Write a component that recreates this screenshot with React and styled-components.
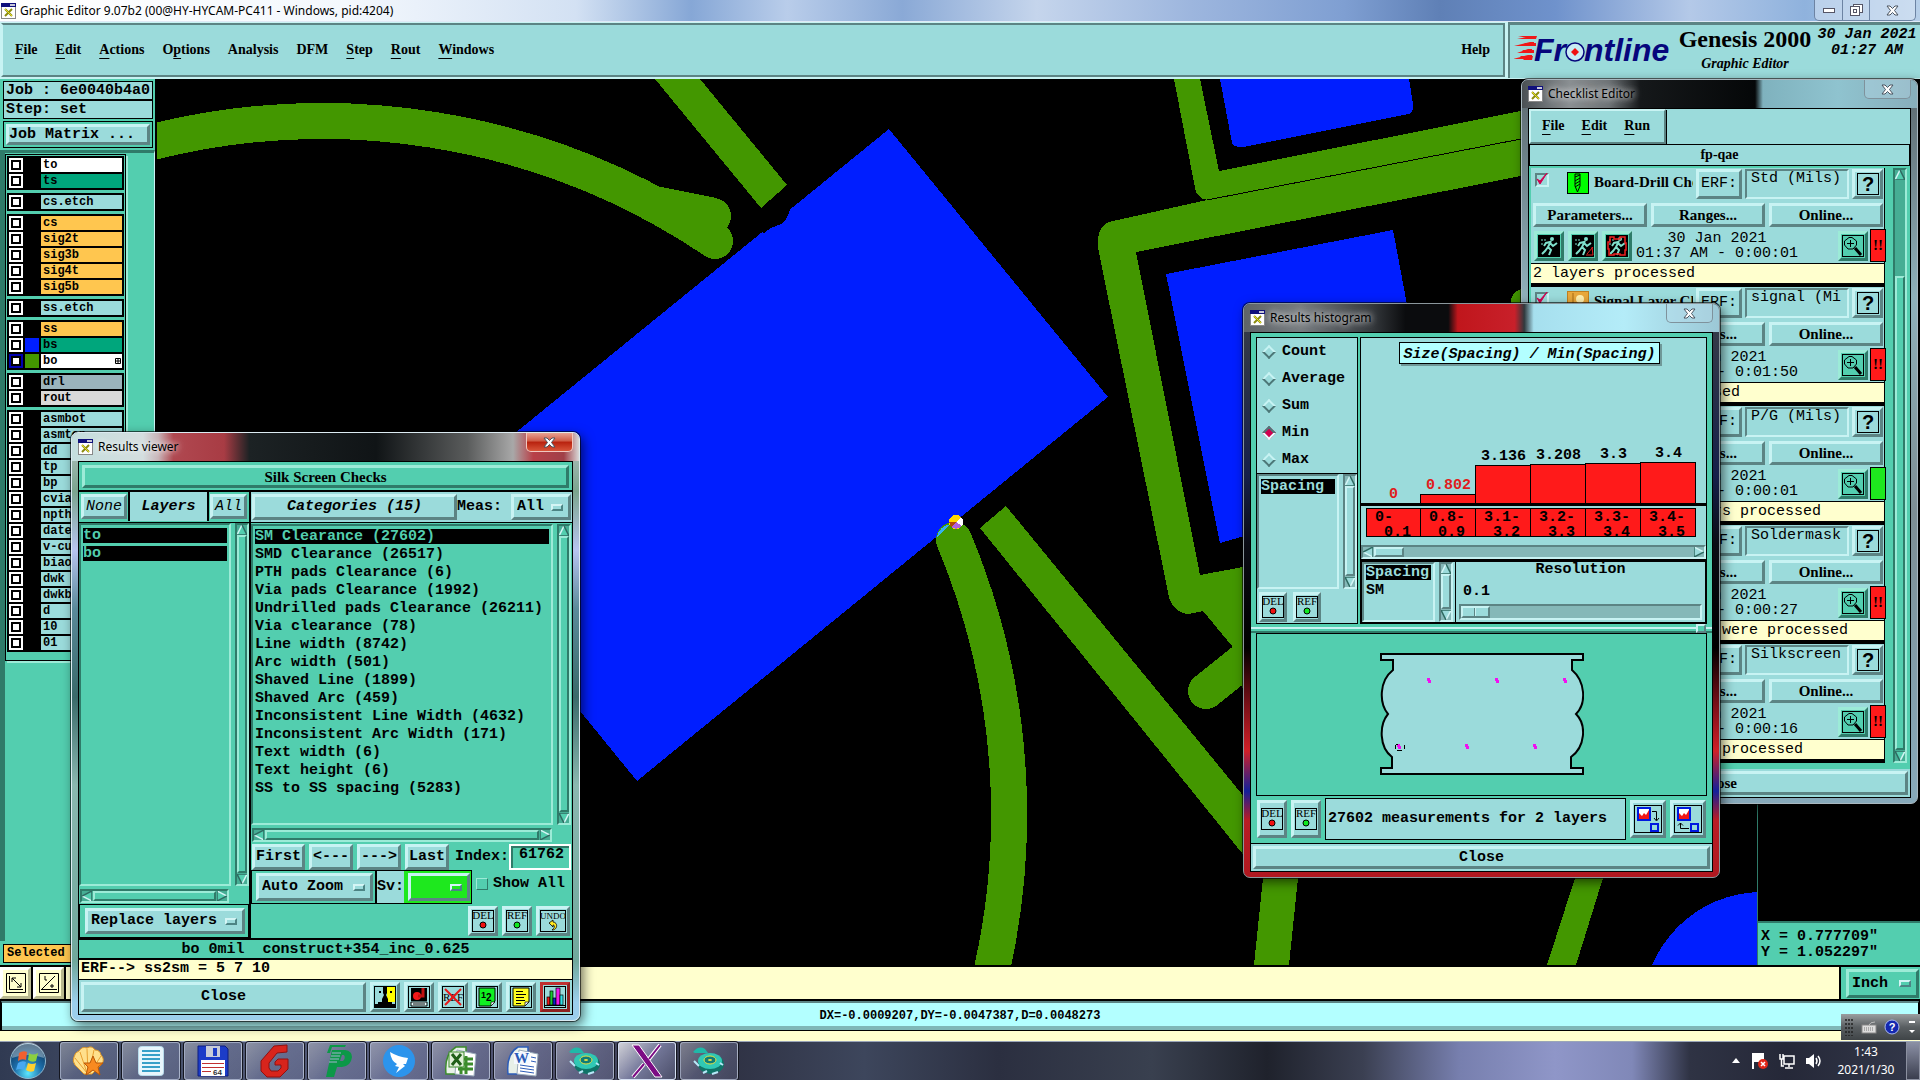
import { useState } from 'react';
import styled, { createGlobalStyle, css } from 'styled-components';

const MONO = '"Liberation Mono", "Courier New", monospace';
const SERIF = '"Liberation Serif", "Times New Roman", serif';
const UI = '"Noto Sans", "Open Sans", sans-serif';

const teal = '#53ceaf';
const cyan = '#9bdbdb';
const pale = '#b3ffff';
const cream = '#ffffce';
const copper = '#ffc64f';

const GlobalStyle = createGlobalStyle`
        * { box-sizing: border-box; }
        body {
            margin: 0;
            background: #000;
            font: 700 15px/16px ${MONO};
            color: #000;
        }
        button, input, select {
            font: inherit;
            color: inherit;
            margin: 0;
            padding: 0;
            border-radius: 0;
        }
        ul { margin: 0; padding: 0; list-style: none; }
        svg { display: block; }
`

const raised = css`
        border: 3px solid;
        border-color: ${p => p.$teal ? '#9cebd7 #2f7b69 #2f7b69 #9cebd7' : '#c8f3f3 #5c8484 #5c8484 #c8f3f3'};
        background: ${p => p.$teal ? teal : cyan};
`

const sunken = css`
        border: 2px solid;
        border-color: ${p => p.$teal ? '#2f7b69 #9cebd7 #9cebd7 #2f7b69' : '#5c8484 #c8f3f3 #c8f3f3 #5c8484'};
`

/* ---------- main window ---------- */

const Desktop = styled.div`
        position: relative;
        min-height: 100vh;
        display: flex;
        flex-direction: column;
        overflow: hidden;
`

const AppTitle = styled.header`
        height: 22px;
        flex: none;
        display: flex;
        align-items: center;
        gap: 4px;
        padding-left: 1px;
        font: 400 12px/18px ${UI};
        background: linear-gradient(90deg, #fff 0, #f4f8fd 18%, #d3e1f3 30%, #86a7d6 36%, #b9cdea 41%, #8aa9d6 47%, #c5d5ec 54%, #9db6de 62%, #7f9fd2 70%, #5f80b6 75%, #6f92cc 81%, #b4c9e8 88%, #8fb2dd 94%, #b7cfe9 100%);
        border-bottom: 1px solid #dfe9f5;
`

const AppButtons = styled.div`
        margin-left: auto;
        margin-right: 4px;
        align-self: stretch;
        display: flex;
        border: 1px solid #6d83a3;
        border-top: 0;
        border-radius: 0 0 5px 5px;
        background: rgba(225, 235, 248, .5);
`

const AppButton = styled.button`
        width: ${p => p.$wide ? 46 : 27}px;
        display: grid;
        place-items: center;
        border: 0;
        border-left: 1px solid #6d83a3;
        background: none;
        &:first-child { border-left: 0; }
`

const Header = styled.div`
        height: 57px;
        flex: none;
        display: flex;
        gap: 3px;
        background: #c8f3f3;
`

const MenuPanel = styled.nav`
        flex: 1;
        display: flex;
        align-items: center;
        gap: 18px;
        padding: 0 13px 0 12px;
        margin: 1px 0 2px 1px;
        background: ${cyan};
        border: 2px solid;
        border-color: #5c8484 #5c8484 #5c8484 #c8f3f3;
`

const MenuButton = styled.button`
        border: 0;
        background: none;
        font: 700 14px/20px ${SERIF};
        margin-left: ${p => p.$push ? 'auto' : 0};
        u { text-underline-offset: 4px; text-decoration-thickness: 1px; }
`

const Brand = styled.div`
        width: 412px;
        display: flex;
        padding-left: 4px;
        background: ${cyan};
        border-top: 3px solid #5c8484;
        border-left: 2px solid #5c8484;
        margin-bottom: 1px;
`

const BrandTitle = styled.div`
        width: 138px;
        text-align: center;
        white-space: nowrap;
        font: 700 24px/28px ${SERIF};
        em { display: block; font-size: 14px; line-height: 22px; }
`

const BrandClock = styled.div`
        flex: 1;
        text-align: center;
        font-style: italic;
        padding-top: 2px;
        white-space: pre-line;
`

const Workspace = styled.div`
        flex: 1;
        min-height: 0;
        display: flex;
        background: #000;
        border-bottom: 2px solid #000;
`

const Sidebar = styled.aside`
        width: 157px;
        flex: none;
        display: flex;
        flex-direction: column;
        background: ${teal};
        border-right: 2px solid #000;
`

const JobInfo = styled.div`
        height: 19px;
        margin: 0 2px 0 3px;
        padding-left: 2px;
        border: 1px solid #000;
        background: ${cyan};
        line-height: 18px;
        white-space: pre;
        &:first-child { margin-top: 2px; }
`

const MatrixBox = styled.div`
        margin: 2px 2px 2px 3px;
        padding: 2px;
        border: 1px solid #000;
        height: 27px;
`

const FlatButton = styled.button`
        ${raised}
        width: ${p => p.$fill ? '100%' : 'auto'};
        height: 100%;
        flex: ${p => p.$grow ? 1 : 'none'};
        min-width: 0;
        padding: 0 ${p => p.$pad || 0}px;
        text-align: ${p => p.$left ? 'left' : 'center'};
        font-style: ${p => p.$italic ? 'italic' : 'normal'};
        font-weight: ${p => p.$thin ? 400 : 700};
        font-family: ${p => p.$serif ? SERIF : MONO};
        white-space: nowrap;
        overflow: hidden;
        line-height: 16px;
`

const LayerArea = styled.div`
        flex: 1;
        min-height: 0;
        border-top: 3px solid #2f7b69;
        border-left: 5px solid #2f7b69;
        border-right: 1px solid #c8f3f3;
`

const LayerFrame = styled.div`
        width: 121px;
        border: 1px solid #000;
        padding: 1px 1px 8px;
        display: flex;
        flex-direction: column;
        gap: 3px;
        margin-top: 1px;
        box-shadow: 2px 2px 0 #9cebd7;
`

const LayerGroup = styled.ul`
        background: #000;
        padding: 1px 2px;
`

const LayerRow = styled.li`
        height: 16px;
        display: flex;
        align-items: center;
        gap: 2px;
`

const LayerCheck = styled.input`
        appearance: none;
        flex: none;
        width: 14px;
        height: 14px;
        border: 2px solid ${p => p.$active ? '#0000b0' : '#fff'};
        background: #fff;
        box-shadow: inset 0 0 0 2px #000;
`

const Swatch = styled.span`
        width: 14px;
        height: 14px;
        background: ${p => p.$color};
`

const LayerName = styled.button`
        flex: 1;
        display: flex;
        align-items: center;
        justify-content: space-between;
        height: 14px;
        border: 0;
        padding: 0 1px 0 2px;
        background: ${p => p.$color};
        font: 700 12px/14px ${MONO};
        text-align: left;
`

const SelectedTag = styled.div`
        margin: 3px 0 2px 3px;
        border: 1px solid #000;
        background: ${copper};
        height: 19px;
        padding-left: 3px;
        font-size: 12px;
        line-height: 17px;
`

const Canvas = styled.svg`
        flex: 1;
        min-width: 0;
        height: auto;
        align-self: stretch;
`

const RightColumn = styled.div`
        width: 163px;
        flex: none;
        display: flex;
        flex-direction: column;
        justify-content: flex-end;
        border-left: 1px solid #2f7b69;
`

const Coordinates = styled.div`
        height: 44px;
        padding: 6px 3px;
        background: ${teal};
        border-top: 2px solid #2f7b69;
        white-space: pre;
`

const CommandRow = styled.div`
        height: 34px;
        flex: none;
        display: flex;
        gap: 2px;
        background: #000;
        border-bottom: 2px solid #000;
`

const ViewButton = styled.button`
        width: 31px;
        display: grid;
        place-items: center;
        background: ${cream};
        border: 3px solid;
        border-color: #fff #b9b98f #b9b98f #fff;
`

const CommandLine = styled.input`
        flex: 1;
        border: 0;
        padding: 0 120px;
        background: ${cream};
`

const UnitBox = styled.div`
        width: 79px;
        padding: 2px 1px 1px 5px;
        background: ${teal};
`

const StatusRow = styled.output`
        height: 30px;
        flex: none;
        display: block;
        margin: 0 1px;
        padding: 2px 2px;
        border: 1px solid #000;
        border-top: 2px solid #5c8484;
        background: ${pale};
        font-size: 12px;
        line-height: 22px;
        text-align: center;
        box-shadow: inset 0 -4px 0 #7fb7b7;
`

const CreamStrip = styled.div`
        height: 10px;
        flex: none;
        background: ${cream};
`

/* ---------- floating windows ---------- */

const FloatWindow = styled.section`
        position: absolute;
        left: ${p => p.$x}px;
        top: ${p => p.$y}px;
        width: ${p => p.$w}px;
        padding: 0 6px 5px;
        border: 1px solid;
        border-color: ${p => p.$edge || '#a9b8c0'};
        border-radius: 7px;
        background: ${p => p.$glass};
        box-shadow: 0 0 0 1px rgba(0, 0, 0, .6), 3px 4px 12px rgba(0, 0, 0, .6);
        overflow: hidden;
`

const FloatTitle = styled.div`
        display: flex;
        gap: 5px;
        align-items: center;
        height: 28px;
        margin: 0 -6px;
        padding: 0 6px;
        background: ${p => p.$glass};
        font: 400 12px/18px ${UI};
        h2 { margin: 0; font: inherit; text-shadow: 0 0 6px rgba(255, 255, 255, .9), 0 0 10px rgba(255, 255, 255, .7); }
`

const CloseX = styled.button`
        margin-left: auto;
        align-self: flex-start;
        width: 47px;
        height: 19px;
        display: grid;
        place-items: center;
        border: 1px solid ${p => p.$red ? '#f0c8c0' : '#7f929c'};
        border-top: 0;
        border-radius: 0 0 5px 5px;
        background: ${p => p.$red ? 'linear-gradient(#e8a293, #cf5a45 45%, #b8210e 50%, #d8553a)' : 'rgba(190, 220, 235, .35)'};
`

const Client = styled.div`
        border: 1px solid #000;
        background: ${p => p.$color || teal};
`

const Strip = styled.div`
        height: ${p => p.$h}px;
        padding: 0 2px;
        line-height: ${p => p.$h - 2}px;
        text-align: ${p => p.$center ? 'center' : 'left'};
        white-space: pre;
        overflow: hidden;
        background: ${p => p.$color || teal};
        border-top: ${p => p.$top || 0}px solid #000;
        border-bottom: ${p => p.$line || 1}px solid #000;
        font-weight: ${p => p.$thin ? 400 : 700};
`

const Row = styled.div`
        display: flex;
        align-items: ${p => p.$align || 'stretch'};
        gap: ${p => p.$gap || 0}px;
        height: ${p => p.$h ? p.$h + 'px' : 'auto'};
        width: ${p => p.$w ? p.$w + 'px' : 'auto'};
        padding: ${p => p.$pad || 0};
        justify-content: ${p => p.$justify || 'flex-start'};
        background: ${p => p.$color || 'none'};
        border-top: ${p => p.$top || 0}px solid #000;
        border-bottom: ${p => p.$line || 0}px solid #000;
`

const Column = styled.div`
        display: flex;
        flex-direction: column;
        flex: ${p => p.$w ? 'none' : 1};
        width: ${p => p.$w ? p.$w + 'px' : 'auto'};
        min-width: 0;
`

const LeftColumn = styled(Column)`
        border-right: 2px solid #000;
`

const HeadLabel = styled.div`
        flex: 1;
        background: ${cyan};
        border: solid #000;
        border-width: 0 2px;
        margin: -2px 1px;
        text-align: center;
        font-style: italic;
        line-height: 29px;
`

const ListBox = styled.ul`
        ${sunken}
        flex: 1;
        min-width: 0;
        padding: ${p => p.$tight ? '0 2px' : '2px'};
        background: ${p => p.$teal ? teal : cyan};
`

const ListItem = styled.li`
        height: 18px;
        border: solid ${p => p.$teal ? teal : cyan};
        border-width: 1px 0 2px;
        line-height: 15px;
        white-space: nowrap;
        overflow: hidden;
        background: ${p => p.$on ? '#000' : 'none'};
        color: ${p => p.$on ? (p.$teal ? teal : cyan) : '#000'};
`

const BarTrack = styled.div`
        ${sunken}
        flex: none;
        display: flex;
        flex-direction: ${p => p.$across ? 'row' : 'column'};
        width: ${p => p.$across ? 'auto' : '14px'};
        height: ${p => p.$across ? '14px' : 'auto'};
        background: ${p => p.$teal ? '#46ad94' : '#85b8b8'};
        svg { flex: none; }
`

const Thumb = styled.span`
        ${raised}
        border-width: 2px;
        flex: ${p => p.$size ? 'none' : 1};
        width: ${p => p.$across && p.$size ? p.$size + 'px' : 'auto'};
        margin: ${p => p.$across ? '0 1px' : '1px 0'};
        margin-top: ${p => p.$start || 0}px;
`

const TrackRest = styled.span`
        flex: 1;
`

const HScrollSlot = styled.div`
        height: 18px;
        padding: 3px 20px 1px 1px;
`

const OptionLabel = styled.label`
        ${raised}
        position: relative;
        display: flex;
        align-items: center;
        height: 100%;
        flex: ${p => p.$w ? 'none' : 1};
        width: ${p => p.$w ? p.$w + 'px' : 'auto'};
        background: ${p => p.$fill || (p.$teal ? teal : cyan)};
        &::after {
            content: '';
            box-sizing: border-box;
            position: absolute;
            right: 5px;
            width: 12px;
            height: 7px;
            border: 2px solid;
            border-color: #d4f5f5 #4c8484 #4c8484 #d4f5f5;
            pointer-events: none;
        }
        select {
            appearance: none;
            width: 100%;
            border: 0;
            padding: 0 0 0 3px;
            background: none;
            line-height: 16px;
        }
`

const FieldText = styled.span`
        background: ${p => p.$color || 'none'};
        line-height: ${p => p.$lh || 26}px;
        border-left: ${p => p.$bar || 0}px solid #000;
        white-space: nowrap;
`

const IndexLabel = styled.label`
        display: flex;
        margin-left: auto;
`

const IndexInput = styled.input`
        width: 62px;
        border: 2px solid #fff;
        box-shadow: inset 2px 2px 0 #2f7b69;
        background: ${teal};
        padding: 0 0 4px 8px;
`

const Framed = styled.div`
        display: flex;
        border: 1px solid #000;
        height: ${p => p.$h}px;
        padding: ${p => p.$pad || 0};
`

const CheckLabel = styled.label`
        display: flex;
        gap: 5px;
        align-items: center;
        padding: 6px 0 0 4px;
        height: 22px;
        white-space: nowrap;
        input {
            ${sunken}
            appearance: none;
            width: 12px;
            height: 12px;
            border-width: 1px;
            border-color: #9cebd7 #2f7b69 #2f7b69 #9cebd7;
        }
`

const IconButton = styled.button`
        ${raised}
        flex: none;
        width: ${p => p.$w || 30}px;
        height: ${p => p.$h || 30}px;
        display: grid;
        place-items: center;
        ${p => p.$red && css`border-color: #c03030 #902020 #902020 #c03030;`}
`

/* ---------- histogram ---------- */

const Panel = styled.div`
        border: ${p => p.$edge || 1}px solid #000;
        background: ${p => p.$color || cyan};
        flex: ${p => p.$grow ? 1 : 'none'};
        height: ${p => p.$h ? p.$h + 'px' : 'auto'};
        width: ${p => p.$w ? p.$w + 'px' : 'auto'};
        display: flex;
        flex-direction: ${p => p.$row ? 'row' : 'column'};
        min-width: 0;
`

const MapPanel = styled(Panel)`
        align-items: center;
        justify-content: center;
        padding-bottom: 2px;
`

const MessagePanel = styled(Panel)`
        padding: 0 2px;
        line-height: 40px;
`

const RadioLabel = styled.label`
        display: flex;
        align-items: center;
        gap: 8px;
        height: 27px;
        padding-left: 6px;
        input {
            appearance: none;
            width: 10px;
            height: 10px;
            margin-left: 1px;
            transform: rotate(45deg);
            border: 2px solid;
            border-color: #c8f3f3 #4c7777 #4c7777 #c8f3f3;
        }
        input:checked {
            border-color: #4c7777 #e8ffff #e8ffff #4c7777;
            background: #d00050;
        }
`

const ChartTitle = styled.div`
        align-self: center;
        margin: 4px 8px 0 0;
        height: 22px;
        padding: 0 3px;
        border: 1px solid #000;
        background: ${pale};
        box-shadow: 2px 2px 0 #6f9898;
        font-style: italic;
        line-height: 24px;
`

const Bars = styled.div`
        flex: 1;
        display: flex;
        align-items: flex-end;
        padding-left: 5px;
        border-bottom: 3px solid #000;
`

const BarColumn = styled.div`
        width: 55px;
        text-align: center;
        color: ${p => p.$low ? '#e01c1c' : '#000'};
        div {
            background: #ff1a1a;
            border: solid #000;
            border-width: ${p => p.$empty ? 0 : '1px 1px 0 0'};
            box-shadow: ${p => p.$empty ? 'none' : '-1px 0 0 #000'};
        }
`

const Ranges = styled.div`
        display: flex;
        margin: 2px 0 8px 5px;
        height: 29px;
`

const Range = styled.div`
        width: 55px;
        background: #ff1a1a;
        border: 1px solid #000;
        border-left-width: ${p => p.$first ? 1 : 0}px;
        padding-left: 8px;
        line-height: 15px;
        padding-top: 1px;
        white-space: pre;
`

const Slider = styled.input`
        appearance: none;
        ${sunken}
        height: 16px;
        width: 100%;
        background: #85b8b8;
        &::-webkit-slider-thumb {
            appearance: none;
            width: 29px;
            height: 12px;
            border: 2px solid;
            border-color: #c8f3f3 #5c8484 #5c8484 #c8f3f3;
            background: linear-gradient(90deg, ${cyan} 11px, #5c8484 11px, #5c8484 12px, #c8f3f3 12px, #c8f3f3 13px, ${cyan} 13px);
        }
`

const ResolutionField = styled.label`
        flex: 1;
        display: flex;
        flex-direction: column;
        justify-content: space-between;
        min-width: 0;
        padding: 0 3px 2px;
        border-left: 1px solid #000;
        span { text-align: center; }
        output { padding-left: 4px; margin-bottom: -2px; }
`

const Sash = styled.div`
        height: 9px;
        display: flex;
        align-items: center;
        justify-content: flex-end;
        padding-right: 6px;
        background: linear-gradient(transparent 3px, #c8f3f3 3px, #c8f3f3 5px, transparent 5px, transparent 7px, #2f7b69 7px);
        i { ${raised} border-width: 2px; background: ${teal}; width: 10px; height: 9px; }
`

/* ---------- checklist ---------- */

const CheckMenu = styled.nav`
        width: 137px;
        height: 35px;
        display: flex;
        align-items: center;
        gap: 17px;
        padding: 0 0 2px 11px;
        ${raised}
        border-width: 2px;
        box-shadow: 1px 1px 0 #000;
`

const CheckTitle = styled.div`
        height: 22px;
        border: 1px solid #000;
        text-align: center;
        font: 700 14px/19px ${SERIF};
`

const CheckItem = styled.article`
        height: 119px;
        background: ${cyan};
        border-right: 1px solid #000;
        border-bottom: 3px solid #000;
        font-weight: 400;
`

const ItemName = styled.label`
        flex: 1;
        display: flex;
        align-items: flex-start;
        min-width: 0;
        overflow: hidden;
        font: 700 15px/26px ${SERIF};
        white-space: nowrap;
        input {
            ${sunken}
            appearance: none;
            flex: none;
            width: 14px;
            height: 14px;
            margin: 4px 18px 0 1px;
        }
        svg { flex: none; margin: 3px 5px 0 0; }
`

const Tick = styled.span`
        width: 0;
        svg { margin: 4px 0 0 5px; pointer-events: none; position: relative; }
`

const ErfInput = styled.input`
        ${sunken}
        width: 104px;
        height: 30px;
        background: ${cyan};
        padding: 0 0 12px 4px;
`

const ItemTime = styled.time`
        flex: 1;
        text-align: center;
        white-space: pre;
        line-height: 15px;
`

const Severity = styled.span`
        width: 16px;
        height: 33px;
        border: 1px solid #000;
        background: ${p => p.$color};
        font: 700 15px/30px ${SERIF};
        text-align: center;
`

/* ---------- taskbar ---------- */

const Taskbar = styled.footer`
        height: 39px;
        flex: none;
        display: flex;
        align-items: center;
        gap: 4px;
        border-top: 1px solid #9aa5b8;
        background: linear-gradient(90deg, #303a52 0, #48526c 8%, #555c7c 20%, #4a4c68 30%, #2f3244 38%, #3d465c 45%, #2b2f40 52%, #39404f 60%, #1f222c 66%, #3b4052 71%, #777fae 76%, #8f96c8 81%, #8088b8 85%, #2f3344 88%, #252838 93%, #33384a 100%);
`

const StartButton = styled.button`
        width: 56px;
        border: 0;
        background: none;
        display: grid;
        place-items: center;
`

const TaskButton = styled.button`
        width: 58px;
        height: 38px;
        display: grid;
        place-items: center;
        border: 1px solid rgba(215, 225, 245, ${p => p.$on ? .95 : .55});
        border-radius: 3px;
        background: linear-gradient(135deg, rgba(255, 255, 255, ${p => p.$on ? .75 : .35}), rgba(170, 175, 220, ${p => p.$on ? .5 : .25}) 50%, rgba(150, 155, 200, .2));
        box-shadow: 0 0 0 1px #14161f;
`

const Tray = styled.div`
        margin-left: auto;
        height: 100%;
        display: flex;
        align-items: center;
        gap: 10px;
        color: #fff;
        font: 400 12px/18px ${UI};
        text-align: center;
        time { width: 60px; white-space: pre-line; margin-left: 3px; }
        > button {
            width: 14px;
            height: 100%;
            border: 1px solid #8b90a0;
            background: linear-gradient(#8a8fa4, #3a3e4e);
        }
`

const LanguageBar = styled.div`
        position: absolute;
        right: 0;
        bottom: 40px;
        width: 79px;
        height: 26px;
        background: linear-gradient(#9a9ea0, #5a5f62 50%, #3f4447);
        display: flex;
        align-items: center;
        justify-content: space-around;
`

/* ---------- data ---------- */

const layerGroups = [
    [['to', '#fff'], ['ts', '#00a67c']],
    [['cs.etch', cyan]],
    [['cs', copper], ['sig2t', copper], ['sig3b', copper], ['sig4t', copper], ['sig5b', copper]],
    [['ss.etch', cyan]],
    [['ss', copper], ['bs', '#00a67c', '#001eff'], ['bo', '#fff', '#439700']],
    [['drl', '#9ab4bc'], ['rout', '#d9d9d9']],
    ['asmbot', 'asmtop', 'dd', 'tp', 'bp', 'cvia', 'npth', 'date', 'v-cut', 'biao', 'dwk', 'dwkb', 'd', '10', '01'].map(n => [n, cyan]),
]

const categories = [
    'SM Clearance (27602)', 'SMD Clearance (26517)', 'PTH pads Clearance (6)', 'Via pads Clearance (1992)',
    'Undrilled pads Clearance (26211)', 'Via clearance (78)', 'Line width (8742)', 'Arc width (501)',
    'Shaved Line (1899)', 'Shaved Arc (459)', 'Inconsistent Line Width (4632)', 'Inconsistent Arc Width (171)',
    'Text width (6)', 'Text height (6)', 'SS to SS spacing (5283)',
]

const bars = [
    { label: '0', height: 0, from: '0-', to: '0.1', low: true },
    { label: '0.802', height: 9, from: '0.8-', to: '0.9', low: true },
    { label: '3.136', height: 38, from: '3.1-', to: '3.2' },
    { label: '3.208', height: 39, from: '3.2-', to: '3.3' },
    { label: '3.3', height: 40, from: '3.3-', to: '3.4' },
    { label: '3.4', height: 41, from: '3.4-', to: '3.5' },
]

const checks = [
    { name: 'Board-Drill Checks', erf: 'Std (Mils)', time: '01:37 AM - 0:00:01', note: '2 layers processed', color: '#00ff00', flag: '#ff1a1a' },
    { name: 'Signal Layer Checks', erf: 'signal (Mi', time: '01:39 AM - 0:01:50', note: '6 layers were processed', color: '#e8a83c', flag: '#ff1a1a' },
    { name: 'Power/Ground Checks', erf: 'P/G (Mils)', time: '01:39 AM - 0:00:01', note: 'No power/ground layers processed', color: '#e8a83c', flag: '#1ee81e' },
    { name: 'Solder Mask Checks', erf: 'Soldermask', time: '01:40 AM - 0:00:27', note: '2 solder mask layers were processed', color: '#00a67c', flag: '#ff1a1a' },
    { name: 'Silk Screen Checks', erf: 'Silkscreen', time: '01:41 AM - 0:00:16', note: '2 silk screen layers processed', color: '#fff', flag: '#ff1a1a' },
]

/* ---------- icons ---------- */

const XIcon = () => (
    <svg width="15" height="16" viewBox="0 0 15 16">
        <rect x=".5" y=".5" width="14" height="15" fill="#fff" stroke="#888" />
        <rect width="15" height="4" fill="#10107c" />
        <rect x="9" y="1" width="5" height="2" fill="#c8c8d8" />
        <path d="M4 6 L11 13 M11 6 L4 13" stroke="#8c8c10" strokeWidth="2" />
        <path d="M4 6 L11 13" stroke="#e8e020" strokeWidth="1" />
    </svg>
)

const CrossIcon = () => (
    <svg width="13" height="11" viewBox="0 0 13 11">
        <path d="M1 1 H4 L6.500 3.500 L9 1 H12 L8.500 5.500 L12 10 H9 L6.500 7.500 L4 10 H1 L4.500 5.500 Z" fill="#fff" stroke="#4b5560" />
    </svg>
)

const Arrow = ({ dir, dark }) => {
    const turn = { up: 0, right: 90, down: 180, left: 270 }[dir]
    return (
        <svg width="10" height="10" viewBox="0 0 10 10">
            <g transform={`rotate(${turn} 5 5)`}>
                <path d="M5 0 L10 10 H0 Z" fill={dark ? teal : cyan} />
                <path d="M5 0 L0 10" stroke="#d4f5f5" strokeWidth="1.500" />
                <path d="M5 0 L10 10 H0" fill="none" stroke="#2f6b62" strokeWidth="1.500" />
            </g>
        </svg>
    )
}

function ScrollBar({ across, dark, size, start }) {
    return (
        <BarTrack $across={across} $teal={dark}>
            <Arrow dir={across ? 'left' : 'up'} dark={dark} />
            <Thumb $across={across} $teal={dark} $size={size} $start={start} />
            {size && <TrackRest />}
            <Arrow dir={across ? 'right' : 'down'} dark={dark} />
        </BarTrack>
    )
}

const TagIcon = ({ text, children, wide }) => (
    <svg width={wide ? 26 : 22} height="22" viewBox={wide ? '0 0 26 22' : '0 0 22 22'}>
        <rect x=".5" y=".5" width={wide ? 25 : 21} height="21" fill="none" stroke="#000" />
        <text x={wide ? 13 : 11} y="9" textAnchor="middle" fontFamily="Liberation Serif" fontSize={wide ? 9 : 11} fontWeight="400">{text}</text>
        {children}
    </svg>
)
const DelIcon = () => <TagIcon text="DEL"><circle cx="11" cy="15" r="3" fill="#f01010" stroke="#000" /></TagIcon>
const RefIcon = () => <TagIcon text="REF"><circle cx="11" cy="15" r="3" fill="#10e820" stroke="#000" /></TagIcon>
const UndoIcon = () => (
    <TagIcon text="UNDO" wide>
        <path d="M9 13 L13 10 V12 C18 12 18 20 12 20 C15 18 15 15 13 15 V17 Z" fill="#ffe820" stroke="#000" strokeWidth=".8" />
    </TagIcon>
)

const FacesIcon = () => (
    <svg width="22" height="22" viewBox="0 0 22 22">
        <rect x=".5" y=".5" width="21" height="21" fill={cyan} stroke="#000" />
        <rect x="13" y="1" width="8" height="15" fill="#ffff00" />
        <path d="M9 1 H13 V7 L12 9 L14 13 V16 H18 V18 H21 V21 H1 V18 H4 V16 H8 V13 L10 9 L9 7 Z" fill="#000" />
        <rect x="5" y="5" width="2" height="2" /><rect x="16" y="5" width="2" height="2" />
    </svg>
)
const DiskIcon = () => (
    <svg width="22" height="22" viewBox="0 0 22 22">
        <rect x=".5" y=".5" width="21" height="21" fill={cyan} stroke="#000" />
        <rect x="3" y="2" width="16" height="13" /><circle cx="9" cy="10" r="4" fill="#f01818" />
        <path d="M10 10 H15 V2" stroke="#c01010" strokeWidth="3" fill="none" />
        <path d="M3 16 H19 V20 H3 Z" fill="#e8ffff" stroke="#000" /><path d="M5 18 H17" stroke="#000" />
    </svg>
)
const NoRefIcon = () => (
    <svg width="22" height="22" viewBox="0 0 22 22">
        <rect x=".5" y=".5" width="21" height="21" fill="none" stroke="#000" />
        <text x="11" y="15" textAnchor="middle" fontFamily="Liberation Serif" fontSize="11" fontWeight="400">REF</text>
        <path d="M3 3 L19 19 M19 3 L3 19" stroke="#e81818" strokeWidth="2" />
    </svg>
)
const NumbersIcon = () => (
    <svg width="22" height="22" viewBox="0 0 22 22">
        <rect x=".5" y=".5" width="21" height="21" fill={cyan} stroke="#000" />
        <path d="M3 2 H19 V15 L15 20 H3 Z" fill="#10f020" stroke="#000" />
        <path d="M15 20 V16 H19 Z" fill="#fff" stroke="#000" strokeWidth=".7" />
        <text x="5" y="12" fontFamily="Liberation Sans" fontSize="9" fontWeight="700">1</text>
        <text x="10" y="15" fontFamily="Liberation Sans" fontSize="10" fontWeight="700">2</text>
    </svg>
)
const NoteIcon = () => (
    <svg width="22" height="22" viewBox="0 0 22 22">
        <rect x=".5" y=".5" width="21" height="21" fill={cyan} stroke="#000" />
        <path d="M3 2 H19 V16 L15 20 H3 Z" fill="#ffff20" stroke="#000" />
        <path d="M15 20 V16 H19 Z" fill="#fff" stroke="#000" strokeWidth=".7" />
        <path d="M6 5.500 H13 M6 8.500 H16 M6 11.500 H14 M6 14.500 H15 M6 17.500 H11" stroke="#000" />
    </svg>
)
const ChartIcon = () => (
    <svg width="22" height="22" viewBox="0 0 22 22">
        <rect x=".5" y=".5" width="21" height="21" fill={cyan} stroke="#000" />
        <g stroke="#000" strokeWidth=".7">
            <rect x="3" y="11" width="3" height="8" fill="#f01818" /><rect x="6" y="5" width="3" height="14" fill="#18c830" />
            <rect x="9" y="12" width="3" height="7" fill="#1020d0" /><rect x="12" y="2" width="4" height="17" fill="#f018e8" />
            <rect x="16" y="9" width="3" height="10" fill="#30e0e8" />
        </g>
        <path d="M1 19.500 H21" stroke="#000" />
    </svg>
)

const RunIcon = ({ kind }) => (
    <svg width="22" height="22" viewBox="0 0 22 22">
        <rect width="22" height="22" />
        <g stroke="#7fe0cc" fill="none" strokeWidth="2">
            <path d="M13 6 L10 12 L13 15 L11 20 M10 12 L7 16 L4 19 M12 7 L8 8 L6 11 M12 8 L15 11 L19 8" />
            <path d="M3 5 H5 M3 9 H5 M6 5 H8" strokeWidth="1" />
        </g>
        <circle cx="14" cy="4" r="2" fill="#7fe0cc" />
        {kind === 1 && <path d="M14 20 H21 L20 12 M21 12 L15 19" stroke="#e02020" fill="none" />}
        {kind === 2 && <path d="M4 2 H8 V4 H14 V2 H19 V8 H20 V15 H19 V20 H14 V19 H8 V20 H3 V14 H2 V7 H4 Z" stroke="#f02020" fill="none" strokeWidth="1.500" />}
    </svg>
)

const ZoomIcon = () => (
    <svg width="22" height="22" viewBox="0 0 22 22">
        <rect x=".5" y=".5" width="21" height="21" fill="none" stroke="#000" />
        <path d="M7 2.500 H10 L14.500 6 V10 L11 14 H6 L2.500 10 V6 Z" fill="none" stroke="#000" />
        <path d="M5 8.500 H12 M8.500 5 V12" stroke="#000" />
        <path d="M13 13 L19 20" stroke="#000" strokeWidth="3" />
    </svg>
)

const QuestionIcon = () => (
    <svg width="22" height="22" viewBox="0 0 22 22">
        <rect x=".5" y=".5" width="21" height="21" fill="none" stroke="#000" />
        <text x="11" y="18" textAnchor="middle" fontFamily="Liberation Sans" fontSize="20" fontWeight="700">?</text>
    </svg>
)

const CheckKindIcon = ({ color, drill }) => (
    <svg width="22" height="22" viewBox="0 0 22 22">
        <rect x=".5" y=".5" width="21" height="21" fill={color} stroke={drill ? '#000' : '#c08020'} />
        {drill
            ? <path d="M8 2 H13 V14 L10.500 20 L8 14 Z M8 5 L13 3 M8 9 L13 6 M8 12 L13 9 M8 15 L13 12" fill="none" stroke="#000" />
            : <><circle cx="13" cy="8" r="4" fill="#fff0b0" /><path d="M2 14 H20 M6 2 V20" stroke="#a86a10" /></>}
    </svg>
)

const SendIcon = ({ back }) => (
    <svg width="28" height="28" viewBox="0 0 28 28">
        <rect x=".5" y=".5" width="27" height="27" fill="none" stroke="#000" />
        <rect x="4" y="3" width="12" height="12" fill="#fff" stroke="#0018e0" strokeWidth="2" />
        <path d="M5 14 V8 L8 11 L10 8 L12 10 L15 5 V14 Z" fill="#f01818" />
        <rect x="17" y="19" width="7" height="7" fill="none" stroke="#0018e0" strokeWidth="2" />
        {back
            ? <path d="M15 23.500 H6.500 V18 M4 20.500 L6.500 18 L9 20.500" fill="none" stroke="#000" />
            : <path d="M18 6.500 H22.500 V15 M20 13 L22.500 16 L25 13" fill="none" stroke="#000" />}
    </svg>
)

const FrontlineLogo = () => (
    <svg width="162" height="50" viewBox="0 0 162 50">
        <g fill="#f01818">
            <path d="M3 14 H22 V11 H18 Z M0 21 H20 V17 H16 Z M3 28 H18 V24 H14 Z M-1 34 H18 V30 H14 Z" />
            <path d="M4 11 H23 L22 14 H18 Z M10 18 H22 V21 H14 Z M8 25 H20 V28 H12 Z M6 31 H19 L18 35 H10 Z" />
        </g>
        <g fontFamily="Liberation Sans" fontSize="32" fontWeight="700" fontStyle="italic" fill="#06067c">
            <text x="20" y="36">Fr</text>
            <text x="70" y="36">ntline</text>
        </g>
        <circle cx="61" cy="27" r="9" fill="#c8ecf4" stroke="#06067c" strokeWidth="1.500" />
        <path d="M61 23 L65 27 L61 31 L57 27 Z" fill="#f01010" />
    </svg>
)

/* board artwork, drawn in screen units */
const Artwork = () => (
    <Canvas viewBox="157 79 1600 886" preserveAspectRatio="xMinYMin slice" shapeRendering="crispEdges">
        <rect x="157" y="79" width="2600" height="1600" fill="#000" />
        <g fill="#001eff">
            <path d="M889 129 L1108 397 L637 781 L418 512 Z" />
            <path d="M1220 79 L1232 143 Q1235 148 1243 147 L1409 114 Q1415 110 1413 104 L1409 79 Z" />
            <path d="M1166 274 L1393 230 L1440 480 L1220 543 Z" />
            <circle cx="1762" cy="1011" r="119" />
        </g>
        <path d="M796 200 L790 209 Q787 222 779 225 Q771 227 764 233 L745 215 Z" fill="#000" />
        <g fill="#439700">
            <path d="M655 79 H700 L787 185 L761 208 Z" />
            <path d="M1174 79 H1200 L1219 171 L1521 111 V176 L1136 252 L1200 575 L1243 567 V690 L1232 646 L1203 611 L1188 614 Q1173 612 1169 597 L1098 248 Q1096 224 1113 221 L1207 200 Q1197 198 1195 188 Z" />
            <path d="M1006 506 L1250 804 V863 L980 528 Z" />
            <path d="M1203 611 L1260 560 V680 L1232 646 Z" />
            <path d="M1263 878 H1298 L1289 965 H1254 Z" />
            <path d="M1575 878 H1603 L1576 965 H1547 Z" />
            <circle cx="1524" cy="302" r="13" />
            <path d="M656 186 L716 198 L700 225 L660 220 Z" />
        </g>
        <g fill="none" stroke="#439700" strokeWidth="36" strokeLinecap="round">
            <path d="M130 148 A702 702 0 0 1 715 241" />
            <path d="M690 212 L713 216" />
            <path d="M954 540 A710 710 0 0 1 987 990" />
            <path d="M1206 691 L1270 640" />
        </g>
        <path d="M1207 200 L1521 139" stroke="#000" fill="none" />
        <path d="M937 537 Q939 526 951 524 Z" fill="#35b0f0" />
        <g>
            <circle cx="956" cy="522" r="7" fill="#ffd800" />
            <path d="M956 522 L961 517 Q965 522 962 526 Z" fill="#fff" />
            <path d="M951 527 L956 522 L962 526 Q957 531 951 527 Z" fill="#b060e0" />
            <path d="M949 522 H956 L951 527 Z" fill="#b04810" />
        </g>
    </Canvas>
)

const BoardMap = () => (
    <svg width="204" height="124" viewBox="1379 653 204 124">
        <path
            d="M1380 655 H1582 V661 H1571 V671 C1584 682 1586 704 1575 715 C1586 726 1584 748 1570 758 V769 H1582 V775 H1380 V769 H1391 V758 C1378 748 1378 726 1387 715 C1378 704 1378 682 1392 671 V661 H1380 Z"
            fill={cyan} stroke="#000" strokeWidth="2"
        />
        {[[1428, 681], [1496, 681], [1564, 681], [1398, 747], [1466, 747], [1534, 747]].map(([x, y]) => (
            <path key={`${x}-${y}`} d={`M${x - 2} ${y - 2} h3 v2 h1 v3 h-3 v-2 h-1 Z`} fill="#f010f0" />
        ))}
        <path d="M1394.500 746 V750 M1396 751.500 H1401 M1403.500 746 V750 M1395 745.500 H1397" stroke="#000" />
    </svg>
)

const StartOrb = () => (
    <svg width="38" height="38" viewBox="0 0 38 38">
        <defs>
            <radialGradient id="orb" cx=".5" cy=".85" r=".8">
                <stop offset="0" stopColor="#5ce8ff" /><stop offset=".5" stopColor="#1c6ca8" /><stop offset="1" stopColor="#0c3558" />
            </radialGradient>
        </defs>
        <circle cx="19" cy="19" r="17.500" fill="url(#orb)" stroke="#8fb8d0" />
        <path d="M3 16 A16 16 0 0 1 35 16 Q19 10 3 16 Z" fill="#fff" opacity=".35" />
        <path d="M10 11 Q14 8 18 10 L17 18 Q13 16 9 19 Z" fill="#f06030" />
        <path d="M20 11 Q24 14 29 11 L27 19 Q23 21 19 18 Z" fill="#8cd040" />
        <path d="M9 21 Q13 18 17 20 L15 28 Q11 26 7 28 Z" fill="#48a8f0" />
        <path d="M19 21 Q23 23 27 21 L25 29 Q21 31 17 28 Z" fill="#ffd030" />
    </svg>
)

const ShellIcon = () => (
    <svg width="34" height="32" viewBox="0 0 34 32">
        <path d="M12 29 L3 20 Q0 16 2 12 Q3 7 7 6 Q10 1 15 3 Q20 0 23 5 Q28 5 29 10 Q33 14 30 19 L20 29 Z" fill="#ffe08c" stroke="#e09828" />
        <path d="M15 28 L3 13 M15 28 L8 7 M16 28 L15 4 M17 28 L22 5 M18 28 L29 11" stroke="#e8a030" />
        <path d="M21 11 L24 18 L31 18 L26 22 L28 30 L21 25 L14 30 L16 22 L12 18 L18 18 Z" fill="#f88a20" stroke="#b85808" />
    </svg>
)
const PageIcon = () => (
    <svg width="26" height="30" viewBox="0 0 26 30">
        <rect x=".5" y=".5" width="25" height="29" rx="3" fill="#e8f6fc" stroke="#b8dcec" />
        <path d="M4 5 H22 M4 9 H22 M4 13 H22 M4 17 H22 M4 21 H22 M4 25 H22" stroke="#38a0c8" strokeWidth="2" />
    </svg>
)
const FloppyIcon = () => (
    <svg width="32" height="32" viewBox="0 0 32 32">
        <path d="M1 1 H28 L31 4 V31 H1 Z" fill="#1c3cc8" stroke="#0c1c80" />
        <rect x="9" y="1" width="14" height="11" fill="#c8ccd8" /><rect x="16" y="3" width="4" height="8" fill="#1c3cc8" />
        <rect x="4" y="15" width="24" height="16" fill="#fff" />
        <path d="M5 18.500 H27 M5 22.500 H27 M5 26.500 H14" stroke="#c03030" />
        <text x="16" y="30" fontFamily="Liberation Sans" fontSize="8" fill="#333">64</text>
    </svg>
)
const GIcon = () => (
    <svg width="30" height="34" viewBox="0 0 30 34">
        <path d="M27 1 V8 L17 9 L9 19 V24 L11 27 H18 L21 24 V21 H15 V18 L18 15 H28 V25 L20 33 H7 L1 27 V17 L14 2 Z" fill="#d8241c" stroke="#901010" />
    </svg>
)
const PIcon = () => (
    <svg width="32" height="34" viewBox="0 0 32 34">
        <path d="M9 1 H25 L24 3 H11 L9 9 H6 Z" fill="#0c9848" />
        <path d="M11 6 H24 Q31 7 31 13 Q30 22 21 23 H16 L13 33 H5 Z M21 11 L19 17 H22 Q25 14 23 11 Z" fill="#0c9848" fillRule="evenodd" />
        <path d="M11 9 H20 M10 12 H19 M9 15 H18 M8 18 H16" stroke="#9fb4cc" />
    </svg>
)
const BirdIcon = () => (
    <svg width="34" height="34" viewBox="0 0 34 34">
        <circle cx="17" cy="17" r="16" fill="#2c94ec" />
        <path d="M8 8 Q16 13 26 14 L24 20 H21 L23 22 L14 29 L17 23 L13 22 L15 20 Q9 17 8 8 Z" fill="#fff" />
    </svg>
)
const OfficeIcon = ({ word }) => {
    const c = word ? '#2c5cb8' : '#3c8c2c'
    return (
        <svg width="34" height="34" viewBox="0 0 34 34">
            <path d="M2 30 Q0 10 12 3 H22 L22 30 Z" fill="#e8f0e8" stroke={c} strokeWidth="1.500" />
            <path d="M13 6 L32 10 L30 32 L11 30 Z" fill="#fff" stroke="#9ab" />
            {word
                ? <><path d="M14 21 L28 23 M14 24 L28 26 M14 27 L28 29 M25 13 L30 14 M25 17 L30 18" stroke={c} /><rect x="8" y="8" width="16" height="12" fill="#f4f8ff" /><text x="8" y="19" fontFamily="Liberation Serif" fontWeight="700" fontSize="15" fill={c}>W</text></>
                : <><path d="M20 15 H29 M20 20 H29 M14 25 H29 M22 12 V30 M17 23 V30" stroke={c} strokeWidth="3" /><rect x="5" y="8" width="15" height="15" fill="#e0f0d8" stroke={c} /><path d="M8 10 L17 21 M17 10 L8 21" stroke="#206018" strokeWidth="3" /></>}
        </svg>
    )
}
const GenesisIcon = () => (
    <svg width="34" height="32" viewBox="0 0 34 32">
        <path d="M1 7 Q7 0 13 4 L16 8 H3 Z" fill="#20b8a8" />
        <ellipse cx="19" cy="19" rx="13" ry="10" fill="#107468" />
        <ellipse cx="18" cy="16" rx="12" ry="8" fill="#30c8b4" />
        <ellipse cx="18" cy="15" rx="6" ry="4" fill="#107c78" stroke="#e8e040" />
        <ellipse cx="18" cy="15" rx="2" ry="1" fill="#e8e040" />
        <path d="M2 16 L7 21 M11 28 L15 26 M20 29 L26 27 M28 18 L31 20" stroke="#b8e8f8" strokeWidth="2" />
    </svg>
)
const BigXIcon = () => (
    <svg width="32" height="36" viewBox="0 0 32 36">
        <path d="M1 2 H8 L31 34 H24 Z" fill="#7c0c84" stroke="#fff" />
        <path d="M29 2 L18 16 M13 21 L2 34" stroke="#fff" strokeWidth="4" /><path d="M29 2 L18 16 M13 21 L2 34" stroke="#7c0c84" strokeWidth="2" />
    </svg>
)

const tasks = [
    ['Shell', <ShellIcon />], ['Notepad', <PageIcon />], ['Total Commander', <FloppyIcon />], ['Genesis', <GIcon />],
    ['Project', <PIcon />], ['DingTalk', <BirdIcon />], ['Excel', <OfficeIcon />], ['Word', <OfficeIcon word />],
    ['Genesis 2000', <GenesisIcon />], ['Exceed', <BigXIcon />], ['Genesis 2000 toolkit', <GenesisIcon />],
]

/* ---------- windows ---------- */

function Option({ label, value, ...rest }) {
    return (
        <OptionLabel {...rest}>
            <select aria-label={label}><option>{value}</option></select>
        </OptionLabel>
    )
}

function ChecklistEditor() {
    return (
        <FloatWindow $x={1521} $y={79} $w={397} $glass="linear-gradient(#5b676d, #8fb0ba 30%, #7d8e94 60%, #8ab 100%)">
            <FloatTitle $glass="linear-gradient(90deg, #4a5054 0, #8a8f92 12%, #6d7275 22%, #15181a 30%, #050708 59%, #7fb2be 61%, #8fc3cf 80%, #88aebb 100%)">
                <XIcon /><h2>Checklist Editor</h2>
                <CloseX aria-label="Close checklist"><CrossIcon /></CloseX>
            </FloatTitle>
            <Client $color={cyan}>
                <CheckMenu>
                    <MenuButton><u>F</u>ile</MenuButton>
                    <MenuButton><u>E</u>dit</MenuButton>
                    <MenuButton><u>R</u>un</MenuButton>
                </CheckMenu>
                <CheckTitle>fp-qae</CheckTitle>
                <Row $color={teal} $pad="2px 3px 6px 2px" $justify="space-between">
                    <Column $w={354}>
                        {checks.map((c, i) => (
                            <CheckItem key={c.name}>
                                <Row $h={34} $pad="1px 1px 0 0" $gap={3}>
                                    <Tick>
                                        <svg width="12" height="14" viewBox="0 0 12 14">
                                            <path d="M1 6 L4 11 L11 0 L4 8 Z" fill="#d00050" stroke="#d00050" />
                                        </svg>
                                    </Tick>
                                    <ItemName>
                                        <input type="checkbox" defaultChecked />
                                        <CheckKindIcon color={c.color} drill={i === 0} />
                                        {c.name}
                                    </ItemName>
                                    <Row $h={30}><FlatButton $thin $pad={2}>ERF:</FlatButton></Row>
                                    <ErfInput aria-label={`${c.name} ERF`} defaultValue={c.erf} />
                                    <IconButton $w={31} aria-label="Help"><QuestionIcon /></IconButton>
                                </Row>
                                <Row $h={25} $gap={4} $pad="1px 1px 0 2px">
                                    {['Parameters...', 'Ranges...', 'Online...'].map(t => <FlatButton $grow $serif key={t}>{t}</FlatButton>)}
                                </Row>
                                <Row $h={36} $gap={4} $pad="1px 0 0 3px" $align="center">
                                    {[0, 1, 2].map(k => <IconButton $teal key={k} aria-label="Run check"><RunIcon kind={k} /></IconButton>)}
                                    <ItemTime>{`30 Jan 2021\n${c.time}`}</ItemTime>
                                    <Row $gap={2} $pad="0 0 0 36px" $align="center">
                                        <IconButton $teal aria-label="Show results"><ZoomIcon /></IconButton>
                                        <Severity $color={c.flag}>{c.flag === '#ff1a1a' ? '!!' : ''}</Severity>
                                    </Row>
                                </Row>
                                <Strip $h={21} $top={1} $color={cream} $thin>{c.note}</Strip>
                            </CheckItem>
                        ))}
                    </Column>
                    <ScrollBar dark start={96} />
                </Row>
                <Row $h={28} $pad="2px"><FlatButton $fill $serif>Close</FlatButton></Row>
            </Client>
        </FloatWindow>
    )
}

function ResultsHistogram() {
    const [stat, setStat] = useState('Min')
    return (
        <FloatWindow $x={1243} $y={303} $w={477} $edge="#8b979c" $glass="linear-gradient(#3a3f48, #16204a 30%, #0a0c14 42%, #000 60%, #7a1018 70%, #d02028 78%, #14209a 85%, #b81c24 90%, #b01820 100%)">
            <FloatTitle $glass="linear-gradient(90deg, #5f6468 0, #777c80 12%, #34383c 27%, #0b0c0e 34%, #0b0c0e 43%, #c0161c 45%, #c8202a 57%, #30383c 59%, #a6dfee 61%, #b4ecf8 80%, #9cc8d6 100%)">
                <XIcon /><h2>Results histogram</h2>
                <CloseX aria-label="Close histogram"><CrossIcon /></CloseX>
            </FloatTitle>
            <Client>
                <Row $pad="4px 5px 0" $h={291} $gap={2}>
                    <Panel $w={102}>
                        {['Count', 'Average', 'Sum', 'Min', 'Max'].map(s => (
                            <RadioLabel key={s}>
                                <input type="radio" name="stat" checked={stat === s} onChange={() => setStat(s)} />{s}
                            </RadioLabel>
                        ))}
                        <Row $h={116} $gap={4} $top={1}>
                            <ListBox><ListItem $on>Spacing</ListItem></ListBox>
                            <ScrollBar />
                        </Row>
                        <Row $gap={6} $pad="3px 2px 0">
                            <IconButton $w={28} aria-label="Delete"><DelIcon /></IconButton>
                            <IconButton $w={28} aria-label="Refresh"><RefIcon /></IconButton>
                        </Row>
                    </Panel>
                    <Column>
                        <Panel $grow>
                            <ChartTitle>Size(Spacing) / Min(Spacing)</ChartTitle>
                            <Bars>
                                {bars.map(b => (
                                    <BarColumn key={b.from} $low={b.low} $empty={!b.height}>
                                        {b.label}<div style={{ height: b.height }} />
                                    </BarColumn>
                                ))}
                            </Bars>
                            <Ranges>
                                {bars.map((b, i) => <Range key={b.from} $first={!i}>{`${b.from}\n ${b.to}`}</Range>)}
                            </Ranges>
                            <ScrollBar across size={30} />
                        </Panel>
                        <Panel $row $h={64} $edge={2}>
                            <Row $w={73}>
                                <ListBox $tight><ListItem $on>Spacing</ListItem><ListItem>SM</ListItem></ListBox>
                            </Row>
                            <Row $pad="0 2px 0 4px"><ScrollBar /></Row>
                            <ResolutionField>
                                <span>Resolution</span>
                                <output>0.1</output>
                                <Slider type="range" min="0" max="10" defaultValue="0" aria-label="Resolution" />
                            </ResolutionField>
                        </Panel>
                    </Column>
                </Row>
                <Sash><i /></Sash>
                <Row $pad="0 5px">
                    <MapPanel $grow $h={163} $color={teal}>
                        <BoardMap />
                    </MapPanel>
                </Row>
                <Row $h={47} $gap={4} $pad="1px 6px 3px" $align="center">
                    <IconButton $h={38} aria-label="Delete"><DelIcon /></IconButton>
                    <IconButton $h={38} aria-label="Refresh"><RefIcon /></IconButton>
                    <MessagePanel $grow $h={42}>27602 measurements for 2 layers</MessagePanel>
                    <IconButton $w={36} $h={38} aria-label="Send to view"><SendIcon /></IconButton>
                    <IconButton $w={36} $h={38} aria-label="Get from view"><SendIcon back /></IconButton>
                </Row>
                <Row $h={28} $pad="2px" $color={cyan} $top={1}><FlatButton $fill>Close</FlatButton></Row>
            </Client>
        </FloatWindow>
    )
}

function ResultsViewer() {
    const [current, setCurrent] = useState(0)
    return (
        <FloatWindow $x={71} $y={432} $w={509} $edge="#dcebf2" $glass="linear-gradient(#b8c4c8, #7ba58e 10%, #b8c4f0 20%, #5a8a9a 30%, #3a6a6a 45%, #8ab8b0 60%, #70a89c 90%, #9ccfec 97%)">
            <FloatTitle $glass="linear-gradient(90deg, #c4dede 0, #d4dedf 14%, #c8b4b8 17%, #b04850 20%, #a83c44 30%, #1c2224 35%, #101416 60%, #5a5c5c 78%, #a8a8a8 87%, #b84048 91%, #a04048 97%, #d8d8d8 100%)">
                <XIcon /><h2>Results viewer</h2>
                <CloseX $red aria-label="Close viewer"><CrossIcon /></CloseX>
            </FloatTitle>
            <Client>
                <Row $h={30} $pad="3px 3px 2px" $line={2}><FlatButton $teal $fill $serif>Silk Screen Checks</FlatButton></Row>
                <Row>
                    <LeftColumn $w={172}>
                        <Row $h={31} $pad="2px 2px 3px" $line={1}>
                            <FlatButton $italic $thin $pad={2}>None</FlatButton>
                            <HeadLabel>Layers</HeadLabel>
                            <FlatButton $italic $thin $pad={2}>All</FlatButton>
                        </Row>
                        <Row $h={363} $gap={4}>
                            <ListBox $teal><ListItem $teal $on>to</ListItem><ListItem $teal $on>bo</ListItem></ListBox>
                            <ScrollBar dark />
                        </Row>
                        <HScrollSlot><ScrollBar across dark /></HScrollSlot>
                        <Framed $h={34} $pad="3px 3px 3px 5px">
                            <Option label="Layer mode" value="Replace layers" />
                        </Framed>
                    </LeftColumn>
                    <Column>
                        <Row $h={31} $pad="2px 1px" $color={cyan} $line={1}>
                            <FlatButton $grow $italic>Categories (15)</FlatButton>
                            <FieldText>Meas:&nbsp;</FieldText>
                            <Option label="Measurements" value="All" $w={60} />
                        </Row>
                        <Row $h={302} $gap={4} $pad="1px 1px 0 0">
                            <ListBox $teal>
                                {categories.map((c, i) => (
                                    <ListItem key={c} $teal $on={i === current} onClick={() => setCurrent(i)}>{c}</ListItem>
                                ))}
                            </ListBox>
                            <ScrollBar dark />
                        </Row>
                        <HScrollSlot><ScrollBar across dark /></HScrollSlot>
                        <Row $h={27} $gap={4} $pad="1px 1px 0">
                            {['First', '<---', '--->', 'Last'].map(t => <FlatButton key={t} $pad={1}>{t}</FlatButton>)}
                            <IndexLabel>
                                <FieldText>Index:</FieldText>
                                <IndexInput defaultValue="61762" />
                            </IndexLabel>
                        </Row>
                        <Row $h={34}>
                            <Framed $h={34}>
                                <Row $pad="2px 2px 2px 4px"><Option label="Zoom mode" value="Auto Zoom" $w={117} /></Row>
                                <FieldText $color={cyan} $lh={32} $bar={2}>Sv:</FieldText>
                                <Row $color="#1ee81e" $pad="2px 1px 2px 4px"><Option label="Severity" value="" $w={62} $fill="#1ee81e" /></Row>
                            </Framed>
                            <CheckLabel><input type="checkbox" />Show All</CheckLabel>
                        </Row>
                        <Row $h={34} $gap={4} $pad="0 2px" $justify="flex-end" $align="center">
                            <IconButton aria-label="Delete"><DelIcon /></IconButton>
                            <IconButton aria-label="Refresh"><RefIcon /></IconButton>
                            <IconButton $w={34} aria-label="Undo"><UndoIcon /></IconButton>
                        </Row>
                    </Column>
                </Row>
                <Strip $h={22} $center $top={2} $line={2}>{'bo 0mil  construct+354_inc_0.625'}</Strip>
                <Strip $h={20} $color={cream}>{'ERF--> ss2sm = 5 7 10'}</Strip>
                <Row $h={34} $gap={4} $pad="2px" $color={cyan} $align="center">
                    <FlatButton $grow>Close</FlatButton>
                    <IconButton aria-label="Compare"><FacesIcon /></IconButton>
                    <IconButton aria-label="Save"><DiskIcon /></IconButton>
                    <IconButton aria-label="Clear references"><NoRefIcon /></IconButton>
                    <IconButton aria-label="Number"><NumbersIcon /></IconButton>
                    <IconButton aria-label="Notes"><NoteIcon /></IconButton>
                    <IconButton $red aria-label="Histogram"><ChartIcon /></IconButton>
                </Row>
            </Client>
        </FloatWindow>
    )
}

function App() {
    return (
        <>
            <GlobalStyle />
            <Desktop>
                <AppTitle>
                    <XIcon />
                    Graphic Editor 9.07b2 (00@HY-HYCAM-PC411 - Windows, pid:4204)
                    <AppButtons>
                        <AppButton aria-label="Minimize"><svg width="12" height="6"><rect x=".5" y="1.500" width="11" height="4" fill="#fff" stroke="#556" /></svg></AppButton>
                        <AppButton aria-label="Restore"><svg width="13" height="12"><rect x="3.500" y=".5" width="9" height="8" fill="#fff" stroke="#556" /><rect x=".5" y="2.500" width="9" height="9" fill="#fff" stroke="#556" /><rect x="3.500" y="5.500" width="3" height="3" fill="none" stroke="#556" /></svg></AppButton>
                        <AppButton $wide aria-label="Close"><CrossIcon /></AppButton>
                    </AppButtons>
                </AppTitle>
                <Header>
                    <MenuPanel>
                        <MenuButton><u>F</u>ile</MenuButton>
                        <MenuButton><u>E</u>dit</MenuButton>
                        <MenuButton><u>A</u>ctions</MenuButton>
                        <MenuButton>O<u>p</u>tions</MenuButton>
                        <MenuButton>Analysis</MenuButton>
                        <MenuButton>DFM</MenuButton>
                        <MenuButton><u>S</u>tep</MenuButton>
                        <MenuButton><u>R</u>out</MenuButton>
                        <MenuButton><u>W</u>indows</MenuButton>
                        <MenuButton $push>Help</MenuButton>
                    </MenuPanel>
                    <Brand>
                        <FrontlineLogo />
                        <BrandTitle>Genesis 2000<em>Graphic Editor</em></BrandTitle>
                        <BrandClock>{'30 Jan 2021\n01:27 AM'}</BrandClock>
                    </Brand>
                </Header>
                <Workspace>
                    <Sidebar>
                        <JobInfo>Job : 6e0040b4a0</JobInfo>
                        <JobInfo>Step: set</JobInfo>
                        <MatrixBox><FlatButton $fill $left>Job Matrix ...</FlatButton></MatrixBox>
                        <LayerArea>
                            <LayerFrame>
                                {layerGroups.map((group, g) => (
                                    <LayerGroup key={g}>
                                        {group.map(([name, color, swatch]) => (
                                            <LayerRow key={name}>
                                                <LayerCheck type="checkbox" aria-label={name} $active={name === 'bo'} />
                                                <Swatch $color={swatch || '#000'} />
                                                <LayerName $color={color}>
                                                    {name}
                                                    {name === 'bo' && <svg width="6" height="6"><path d="M.5 .5 H5.500 V5.500 H.5 Z M3 0 V6 M0 3 H6" fill="none" stroke="#000" /></svg>}
                                                </LayerName>
                                            </LayerRow>
                                        ))}
                                    </LayerGroup>
                                ))}
                            </LayerFrame>
                        </LayerArea>
                        <SelectedTag>Selected</SelectedTag>
                    </Sidebar>
                    <Artwork />
                    <RightColumn>
                        <Coordinates>{'X = 0.777709"\nY = 1.052297"'}</Coordinates>
                    </RightColumn>
                </Workspace>
                <CommandRow>
                    <ViewButton aria-label="Fit"><svg width="20" height="20"><path d="M.5 .5 H19.500 V19.500 H.5 Z M3.500 3 V16.500 H17 M6 5 L15 14 M6 9 V5 H10 M15 10 V14 H11" fill="none" stroke="#000" /></svg></ViewButton>
                    <ViewButton aria-label="Angle"><svg width="20" height="20"><path d="M.5 .5 H19.500 V19.500 H.5 Z M2 16.500 H18 M3 16 L16 3 M6 3 V7 H8 M12 12 H14 V14 H12 Z" fill="none" stroke="#000" /></svg></ViewButton>
                    <CommandLine aria-label="Command" />
                    <UnitBox><Option label="Units" value="Inch" $teal /></UnitBox>
                </CommandRow>
                <StatusRow>DX=-0.0009207,DY=-0.0047387,D=0.0048273</StatusRow>
                <CreamStrip />
                <Taskbar>
                    <StartButton aria-label="Start"><StartOrb /></StartButton>
                    {tasks.map(([name, icon]) => (
                        <TaskButton key={name} aria-label={name} $on={name === 'Exceed'}>{icon}</TaskButton>
                    ))}
                    <Tray>
                        <svg width="10" height="6"><path d="M5 0 L9 5 H1 Z" fill="#fff" /></svg>
                        <svg width="18" height="18"><path d="M2 1 V17 M3 2 H12 V9 H3" stroke="#fff" strokeWidth="2" fill="#fff" /><circle cx="12" cy="12" r="5" fill="#e02818" /><path d="M10 10 L14 14 M14 10 L10 14" stroke="#fff" strokeWidth="1.500" /></svg>
                        <svg width="16" height="16"><path d="M5 3 H15 V11 H5 Z M10 11 V14 M6 15 H14 M1 1 V6 H4 V1 M2.500 6 V13 H5" fill="none" stroke="#fff" strokeWidth="1.500" /></svg>
                        <svg width="18" height="16"><path d="M1 5 H4 L9 1 V15 L4 11 H1 Z" fill="#fff" /><path d="M11 5 Q13 8 11 11 M13 3 Q17 8 13 13" fill="none" stroke="#fff" strokeWidth="1.500" /></svg>
                        <time>{'1:43\n2021/1/30'}</time>
                        <button aria-label="Show desktop" />
                    </Tray>
                </Taskbar>

                <ChecklistEditor />
                <ResultsHistogram />
                <ResultsViewer />
                <LanguageBar>
                    <svg width="8" height="18"><path d="M1 1 V18 M4 1 V18 M7 1 V18" stroke="#222" strokeWidth="1.500" strokeDasharray="2 2" /></svg>
                    <svg width="16" height="14"><rect x="1" y="5" width="14" height="8" fill="#ddd" stroke="#888" /><path d="M3 8 H13 M3 10 H13" stroke="#777" strokeDasharray="1 1" /><path d="M8 5 Q9 2 14 2" fill="none" stroke="#bbb" /></svg>
                    <svg width="16" height="16"><circle cx="8" cy="8" r="7" fill="#1428b0" stroke="#a8b8f0" /><text x="8" y="12" textAnchor="middle" fontFamily="Liberation Sans" fontWeight="700" fontSize="11" fill="#fff">?</text></svg>
                    <svg width="8" height="18"><path d="M1 4 H7" stroke="#fff" strokeWidth="2" /><path d="M1 12 H7 L4 15 Z" fill="#fff" /></svg>
                </LanguageBar>
            </Desktop>
        </>
    )
}

export default App;
